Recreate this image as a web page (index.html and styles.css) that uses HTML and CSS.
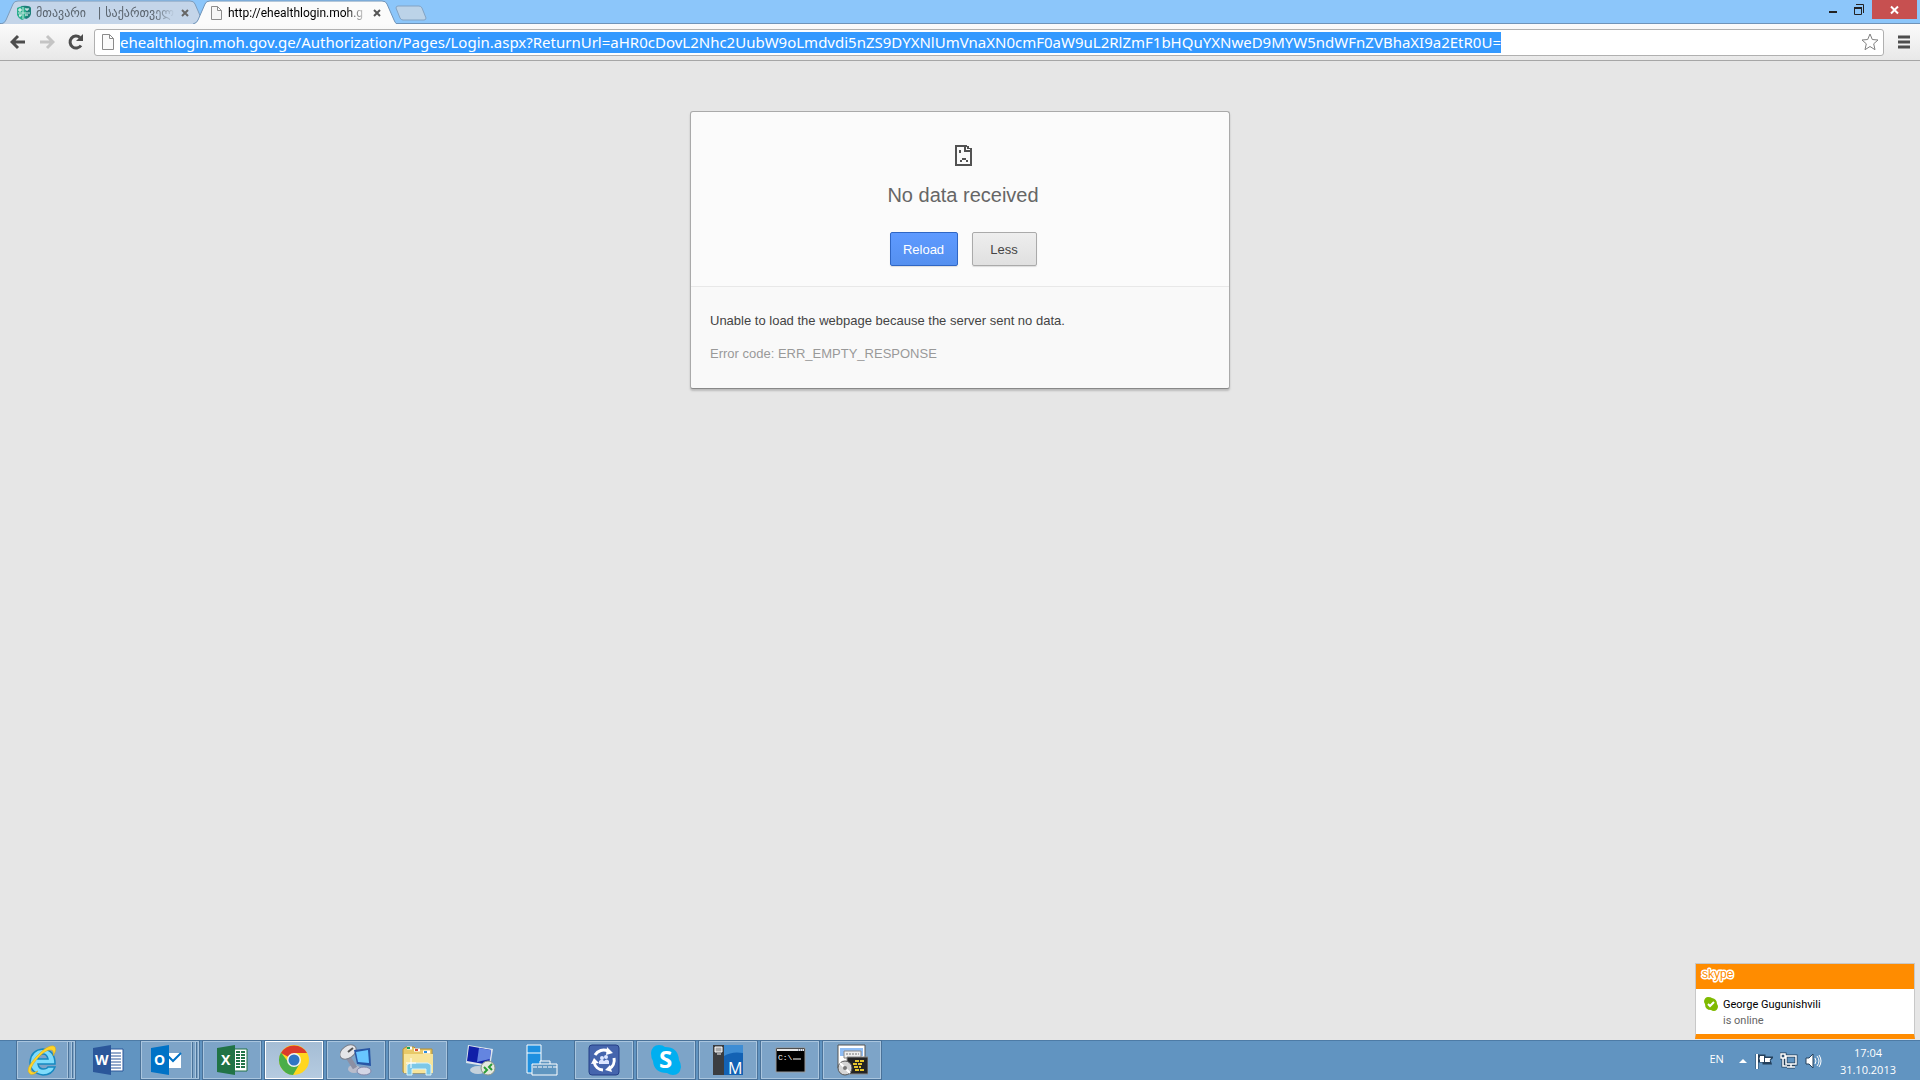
FILE: index.html
```html
<!DOCTYPE html>
<html lang="en">
  <head>
    <meta charset="UTF-8" />
    <meta name="viewport" content="width=device-width, initial-scale=1.0" />
    <title>No data received</title>
    <link rel="stylesheet" href="styles.css">
  </head>
  <body>
    <header class="tabstrip">
      <nav class="tabs">
        <a href="#" class="tab">
          <svg class="tab_shape" viewBox="0 0 204 24" preserveAspectRatio="none"><path d="M0 24 Q4 23 5 20 L12 4 Q13 1 17 1 H189 Q193 1 194 4 L201 20 Q202 23 204 24" fill="#c4d5e9" stroke="#7c9cbc"/></svg>
          <svg class="favicon" viewBox="0 0 16 16"><path d="M5 1Q14 0 15 3V9Q14 13 10 14Q8 12 6 12V4Z" fill="#1c7f78"/><path d="M1 3Q5 0 10 3V11Q9 14 6 15Q2 13 1 10Z" fill="#2bae8d"/><path d="M7 2V14M2 8H14" stroke="#c4e6de"/><path d="M2 5H6M4 3V7M9 4H13M11 4V6M9 10H12M3 10H6M4 10V12" stroke="#fff"/></svg>
          <span class="tab_title geo">მთავარი &nbsp; | საქართველ</span>
          <span class="tab_close"><svg viewBox="0 0 8 8"><path d="M1 1L7 7M7 1L1 7" stroke="#666" stroke-width="2"/></svg></span>
        </a>
        <a href="#" class="tab valgt">
          <svg class="tab_shape" viewBox="0 0 204 24" preserveAspectRatio="none"><path d="M0 24 Q4 23 5 20 L12 4 Q13 1 17 1 H189 Q193 1 194 4 L201 20 Q202 23 204 24" fill="#fbfbfb" stroke="#6f93b8"/></svg>
          <svg class="favicon" viewBox="0 0 16 16"><path d="M3.500 1.500H9.500L13.500 5.500V14.500H3.500ZM9.500 1.500V5.500H13.500" fill="#f6f6f6" stroke="#8d8d8d"/></svg>
          <span class="tab_title">http://ehealthlogin.moh.g</span>
          <span class="tab_close"><svg viewBox="0 0 8 8"><path d="M1 1L7 7M7 1L1 7" stroke="#555" stroke-width="2"/></svg></span>
        </a>
        <button class="new_tab" aria-label="New tab"><svg viewBox="0 0 32 16"><path d="M3 1H24Q26 1 27 3L31 13Q31 15 29 15H8Q6 15 5 13L1 3Q1 1 3 1Z" fill="#bcd3e8" stroke="#83a3c3"/></svg></button>
      </nav>
      <div class="window_buttons">
        <button aria-label="Minimize"><svg width="10" height="12"><path d="M1 8H9" stroke="#222" stroke-width="2"/></svg></button>
        <button aria-label="Restore"><svg width="12" height="12"><path d="M1 3.500H8.500V10.500H1.500V3M3 .500H10.500V9" fill="none" stroke="#222"/><path d="M1 4H9" stroke="#222" stroke-width="2"/></svg></button>
        <button class="close" aria-label="Close"><svg width="10" height="10"><path d="M1 1.500L8 8.500M8 1.500L1 8.500" stroke="#fff" stroke-width="2"/></svg></button>
      </div>
    </header>

    <form class="toolbar">
      <button type="button" aria-label="Back"><svg viewBox="0 0 16 16"><path d="M8 2L2 8L8 14M2 8H15" fill="none" stroke="#4d4d4d" stroke-width="3"/></svg></button>
      <button type="button" aria-label="Forward"><svg viewBox="0 0 16 16"><path d="M8 2L14 8L8 14M14 8H1" fill="none" stroke="#c4c4c4" stroke-width="3"/></svg></button>
      <button type="button" aria-label="Reload page"><svg viewBox="0 0 16 16"><path d="M13 11.500A6 6 0 1 1 12 3.500" fill="none" stroke="#4d4d4d" stroke-width="3"/><path d="M15 0V7H8Z" fill="#4d4d4d"/></svg></button>
      <div class="omnibox">
        <svg class="page_icon" viewBox="0 0 12 16"><path d="M.5 .5H7.500L11.500 4.500V15.500H.5ZM7.500 .5V4.500H11.500" fill="#fafafa" stroke="#8a8a8a"/></svg>
        <input type="text" class="url" aria-label="Address" spellcheck="false" value="ehealthlogin.moh.gov.ge/Authorization/Pages/Login.aspx?ReturnUrl=aHR0cDovL2Nhc2UubW9oLmdvdi5nZS9DYXNlUmVnaXN0cmF0aW9uL2RlZmF1bHQuYXNweD9MYW5ndWFnZVBhaXI9a2EtR0U=">
        <button type="button" class="star" aria-label="Bookmark"><svg viewBox="0 0 18 18"><path d="M9 1L11.300 6.500L17 7L12.700 10.800L14 16.700L9 13.500L4 16.700L5.300 10.800L1 7L6.700 6.500Z" fill="#fff" stroke="#808080" stroke-linejoin="round"/></svg></button>
      </div>
      <button type="button" class="menu" aria-label="Menu"><svg viewBox="0 0 14 14"><path d="M1 2H13M1 7H13M1 12H13" stroke="#4d4d4d" stroke-width="3"/></svg></button>
    </form>

    <main>
      <article class="error">
        <section class="error_top">
          <svg class="sad" width="17" height="21" shape-rendering="crispEdges"><path d="M0 0H12V2H2V19H15V7H9V0H11V5H17V21H0Z" fill="#525252"/><path d="M12 1h2v2h3v4h-2V4h-3zM4 5h2v3H4zM5 15h2v2H5zM11 15h2v2h-2zM7 13h4v2H7z" fill="#525252"/></svg>
          <h1>No data received</h1>
          <div class="knapper">
            <button class="reload">Reload</button>
            <button class="less">Less</button>
          </div>
        </section>
        <section class="details">
          <p>Unable to load the webpage because the server sent no data.</p>
          <p class="code">Error code: ERR_EMPTY_RESPONSE</p>
        </section>
      </article>
    </main>

    <aside class="toast">
      <div class="toast_top">
        <svg width="40" height="20"><text x="3" y="12" class="skype_logo">skype</text></svg>
      </div>
      <div class="toast_body">
        <svg width="14" height="14"><path d="M4 0Q7 0 8 1Q13 2 13 7Q14 8 14 10Q13 14 10 14Q8 14 7 13Q1 13 1 7Q0 6 0 4Q1 0 4 0Z" fill="#7fba00"/><path d="M4 7L6 9L10 5" fill="none" stroke="#fff" stroke-width="2"/></svg>
        <div>
          <p class="name">George Gugunishvili</p>
          <p class="status">is online</p>
        </div>
      </div>
    </aside>

    <footer class="taskbar">
      <div class="apps">
        <button class="app open stacked" aria-label="Internet Explorer">
          <svg viewBox="0 0 32 32"><path d="M29 20H12Q13 25 17 25Q21 25 22 23H29Q26 31 17 31Q4 29 4 18Q5 6 17 5Q29 6 29 20ZM12 15H22Q21 10 17 10Q13 10 12 15Z" fill="#7fdcfb" stroke="#1688c0" stroke-width="1.500"/><path d="M4 30Q-2 26 10 13Q22 0 28 2Q32 5 27 12Q28 6 25 6Q20 5 11 15Q2 26 6 28Q8 29 12 27Q7 32 4 30Z" fill="#ffd42a" stroke="#d5a411" stroke-width=".5"/></svg>
        </button>
        <button class="app" aria-label="Word">
          <svg viewBox="0 0 32 32"><path d="M17 5H31V27H17Z" fill="#fff" stroke="#2b579a"/><path d="M19 9H29M19 12H29M19 15H29M19 18H29M19 21H29M19 24H29" stroke="#2b579a"/><path d="M1 4L19 1V31L1 28Z" fill="#2b579a"/><text x="3" y="21" class="letter">W</text></svg>
        </button>
        <button class="app open stacked" aria-label="Outlook">
          <svg viewBox="0 0 32 32"><path d="M18 9H31V24H18Z" fill="#fff"/><path d="M18 12L23 17L31 9" fill="none" stroke="#0072c6" stroke-width="2"/><path d="M1 4L19 1V31L1 28Z" fill="#0072c6"/><text x="4" y="21" class="letter">O</text></svg>
        </button>
        <button class="app open" aria-label="Excel">
          <svg viewBox="0 0 32 32"><path d="M17 5H31V27H17Z" fill="#fff" stroke="#217346"/><path d="M22 7V25M27 7V25" stroke="#217346" stroke-width="4" stroke-dasharray="2 1"/><path d="M1 4L19 1V31L1 28Z" fill="#217346"/><text x="5" y="21" class="letter">X</text></svg>
        </button>
        <button class="app open valgt" aria-label="Chrome">
          <svg viewBox="0 0 32 32"><circle cx="16" cy="16" r="15" fill="#ffd61f"/><path d="M16 16L3 9A15 15 0 0 1 29 9H16Z" fill="#db3b2b"/><path d="M3 8.500A15 15 0 0 0 15 31L22 19L11 19Z" fill="#4aae48"/><circle cx="16" cy="16" r="7" fill="#f3f3f3"/><circle cx="16" cy="16" r="5.500" fill="#2f75c4"/></svg>
        </button>
        <button class="app open" aria-label="Remote monitor">
          <svg viewBox="0 0 32 32"><ellipse cx="14" cy="25" rx="6" ry="4" fill="#b9bccb"/><path d="M8 13L15 24" stroke="#8c8fa3" stroke-width="5"/><ellipse cx="8" cy="8" rx="9" ry="6" transform="rotate(-35 8 8)" fill="#e4e5e9" stroke="#777d89"/><path d="M8 8L13 4" stroke="#555" stroke-width="2"/><ellipse cx="24" cy="27" rx="7" ry="4" fill="#d3d5e5" stroke="#8488aa"/><path d="M14 6L30 4L31 22L17 20Z" fill="#2856a5"/><path d="M16 8L28 6L29 19L18 18Z" fill="#68c6ff"/></svg>
        </button>
        <button class="app open" aria-label="File Explorer">
          <svg viewBox="0 0 32 32"><path d="M1 28V5L4 3H12L14 5H30V29H3Z" fill="#e8c968" stroke="#b89132"/><path d="M5 4H10M12 6H18M21 8H28" stroke="#fff" stroke-width="3"/><path d="M5 4H8" stroke="#19a35b" stroke-width="2"/><path d="M13 6H16" stroke="#d84a32" stroke-width="2"/><path d="M22 8H25" stroke="#2b8de0" stroke-width="2"/><path d="M2 10H31V29H2Z" fill="#f7e49a"/><path d="M5 31V21L8 19H26L29 21V31H24V25H10V31Z" fill="#7cc8e8" stroke="#d8f3fc"/><path d="M9 14V24M4 19H14" stroke="#fff"/></svg>
        </button>
        <button class="app" aria-label="Remote Desktop">
          <svg viewBox="0 0 32 32"><ellipse cx="14" cy="26" rx="8" ry="4" fill="#c5d2dc"/><path d="M4 1L29 5L26 23L2 19Z" fill="#dde5ed"/><path d="M5 2L27 6L25 21L3 17Z" fill="#1020a8"/><path d="M15 4L27 6L26 15L13 18Z" fill="#6485e0"/><circle cx="24" cy="24" r="7" fill="#e4e8df" stroke="#8a9488"/><path d="M20 23L23 26L20 29M28 20L25 23L28 26" fill="none" stroke="#2b9c36" stroke-width="2"/></svg>
        </button>
        <button class="app" aria-label="Server Manager">
          <svg viewBox="0 0 32 32"><path d="M1 1H15V29H1ZM1 9H15" fill="#1e90e0" stroke="#fff"/><path d="M6 20H31V31H6ZM14 20V17H24V20" fill="#6096c0" stroke="#fff"/><path d="M7 23H31" stroke="#fff" stroke-dasharray="4 1"/></svg>
        </button>
        <button class="app open" aria-label="Updater">
          <svg viewBox="0 0 32 32"><rect x="1" y="1" width="30" height="30" rx="3" fill="#4565ad" stroke="#243e86"/><path d="M7 11A10 10 0 0 1 20 7M26 14A10 10 0 0 1 21 25M15 26A10 10 0 0 1 6 18" fill="none" stroke="#fff" stroke-width="3"/><path d="M19 3L25 9L18 11ZM22 21L24 28L17 26ZM3 20L6 14L11 19Z" fill="#fff"/><circle cx="14" cy="14" r="2" fill="#dce6ff"/><circle cx="18" cy="13" r="2" fill="#dce6ff"/><path d="M11 20V17Q14 14 16 17Q19 14 21 17V20Z" fill="#dce6ff"/></svg>
        </button>
        <button class="app open" aria-label="Skype">
          <svg viewBox="0 0 32 32"><path d="M9 1Q13 1 15 3Q28 3 29 16Q31 19 31 23Q30 31 23 31Q20 31 17 29Q4 29 3 17Q1 14 1 9Q2 1 9 1Z" fill="#00aff0"/><text x="9" y="24" class="letter big">S</text></svg>
        </button>
        <button class="app open" aria-label="Management">
          <svg viewBox="0 0 32 32"><path d="M1 1H13V31H1Z" fill="#3b3d40"/><path d="M12 1H31V31H12Z" fill="#1362b4"/><path d="M12 1H31V9Q20 7 12 12Z" fill="#3e8dd4"/><path d="M3 3H10V8H3ZM5 10H9" fill="#aaa" stroke="#fff"/><text x="16" y="30" class="letter thin">M</text></svg>
        </button>
        <button class="app open" aria-label="Command Prompt">
          <svg viewBox="0 0 32 32"><path d="M2 4H31V28H2Z" fill="#000" stroke="#999"/><path d="M3 6H30" stroke="#e5e5e5" stroke-width="2"/><path d="M24 6H29" stroke="#346" stroke-dasharray="1 1"/><text x="4" y="16" class="prompt">C:\</text><path d="M19 15H27" stroke="#fff"/></svg>
        </button>
        <button class="app open" aria-label="Installer">
          <svg viewBox="0 0 32 32"><path d="M2 1H29V24H2Z" fill="#fff" stroke="#555"/><path d="M4 4H27V12H4Z" fill="#8fbdf5"/><path d="M8 7H25V14H8Z" fill="#eee" stroke="#888"/><path d="M10 10H23" stroke="#777" stroke-dasharray="2 1"/><path d="M11 13H32V30H11Z" fill="#242424" stroke="#888"/><path d="M19 17H28M17 20H27M18 23H25M19 26H28" stroke="#e6c52c" stroke-width="2" stroke-dasharray="4 1"/><circle cx="9" cy="24" r="7" fill="#d5d5d5" stroke="#555"/><path d="M4 19L14 29" stroke="#fff" stroke-width="2"/><circle cx="9" cy="24" r="2" fill="#777"/></svg>
        </button>
      </div>
      <div class="tray">
        <span class="lang">EN</span>
        <svg width="10" height="6"><path d="M1 5L5 1L9 5Z" fill="#fff"/></svg>
        <svg width="18" height="18"><path d="M2 2V17M3 4H9V6H16L14 8L15 11H9V9H3Z" fill="#fff" stroke="#24405c" stroke-width="3"/><path d="M2 2V17" stroke="#fff" stroke-width="2"/><path d="M5 4H9V10H5ZM10 6H16Q14 8 15 10H10Z" fill="#fff"/></svg>
        <svg width="18" height="18"><path d="M6 4H16V12H6ZM11 12V15M7 15H15M1 2H5V6H1ZM3 6V14H7" fill="none" stroke="#24405c" stroke-width="3"/><path d="M6 4H16V12H6ZM11 12V15M7 15H15M1 2H5V6H1ZM3 6V14H7" fill="none" stroke="#fff" stroke-width="1.500"/></svg>
        <svg width="18" height="18"><path d="M1 6H4L8 2V16L4 12H1Z" fill="#fff" stroke="#24405c"/><path d="M10 6Q12 9 10 12M12 4Q16 9 12 14M14 3Q18 9 14 15" fill="none" stroke="#fff"/></svg>
        <time class="clock">17:04<br>31.10.2013</time>
      </div>
    </footer>
  </body>
</html>
```
FILE: styles.css
```css
* {
  box-sizing: border-box;
  margin: 0;
  padding: 0;
}
body {
  display: flex;
  flex-direction: column;
  min-height: 100vh;
  background-color: #e6e6e6;
  font-family: "Liberation Sans", Arial, sans-serif;
}
button {
  border: none;
  background: none;
  font-family: inherit;
}
svg {
  display: block;
  flex: none;
}

/* tabs */
.tabstrip {
  display: flex;
  justify-content: space-between;
  height: 24px;
  background-color: #8cc6fa;
  border-bottom: 1px solid #6f93b8;
}
.tabs {
  display: flex;
  padding-left: 1px;
}
.tab {
  position: relative;
  display: flex;
  align-items: center;
  width: 204px;
  height: 24px;
  margin-right: -12px;
  padding: 2px 12px 0 15px;
  color: #5c6670;
  font-family: Roboto, sans-serif;
  font-size: 12px;
  text-decoration: none;
}
.tab.valgt {
  z-index: 1;
  color: #000;
}
.tab_shape {
  position: absolute;
  inset: 0;
  width: 100%;
  height: 100%;
}
.favicon {
  position: relative;
  width: 16px;
  height: 16px;
}
.tab_title {
  position: relative;
  flex: 1;
  margin: 0 6px 0 4px;
  white-space: nowrap;
  mask-image: linear-gradient(to right, #000 85%, transparent);
}
.geo {
  font-family: "DejaVu Sans", sans-serif;
}
.tab_close {
  position: relative;
  width: 8px;
  margin-right: 4px;
}
.new_tab {
  width: 32px;
  height: 16px;
  margin: 5px 0 0 10px;
}
.window_buttons {
  display: flex;
  padding-right: 3px;
}
.window_buttons button {
  display: flex;
  justify-content: center;
  width: 26px;
  height: 19px;
  padding-top: 4px;
}
.window_buttons .close {
  width: 45px;
  padding-top: 5px;
  background-color: #c75050;
}

/* toolbar */
.toolbar {
  display: flex;
  align-items: center;
  gap: 13px;
  height: 37px;
  padding: 0 9px 0 10px;
  background: linear-gradient(#fbfbfb, #e8e8e8);
  border-bottom: 1px solid #a6a6a6;
}
.toolbar button {
  width: 16px;
  height: 16px;
}
.omnibox {
  display: flex;
  flex: 1;
  align-items: center;
  height: 27px;
  min-width: 0;
  margin-left: -3px;
  padding: 0 4px 0 7px;
  background-color: #fff;
  border: 1px solid #b0b0b0;
  border-radius: 3px;
}
.page_icon {
  width: 12px;
  height: 16px;
  margin-right: 6px;
}
.url {
  field-sizing: content;
  min-width: 0;
  height: 21px;
  border: none;
  outline: none;
  background-color: #3399ff;
  color: #fff;
  font-family: "Noto Sans", sans-serif;
  font-size: 15px;
}
.toolbar .star {
  width: 18px;
  height: 18px;
  margin-left: auto;
}
.toolbar .menu {
  width: 14px;
  height: 14px;
}

/* error page */
main {
  flex: 1;
  padding: 50px 20px;
}
.error {
  max-width: 540px;
  margin: 0 auto;
  background-color: #fbfbfb;
  border: 1px solid #aaa;
  border-bottom-color: #888;
  border-radius: 3px;
  box-shadow: 0 2px 2px #bbb;
}
.error_top {
  display: flex;
  flex-direction: column;
  align-items: center;
  padding: 33px 0 20px 6px;
}
h1 {
  margin: 17px 0 25px;
  color: #666;
  font-size: 20px;
  font-weight: normal;
  line-height: 24px;
}
.knapper {
  display: flex;
  gap: 14px;
}
.knapper button {
  height: 34px;
  border: 1px solid #aaa;
  border-radius: 2px;
  box-shadow: 0 1px 1px #ddd;
  font-size: 13px;
}
.knapper .reload {
  width: 68px;
  background: linear-gradient(#5e9aff, #5590ef);
  border-color: #2f66c4;
  color: #fff;
}
.knapper .less {
  width: 65px;
  background: linear-gradient(#eee, #e0e0e0);
  color: #444;
}
.details {
  padding: 24px 19px;
  background-color: #f9f9f9;
  border-top: 1px solid #e8e8e8;
  border-radius: 0 0 3px 3px;
  color: #444;
  font-size: 13px;
  line-height: 20px;
}
.details .code {
  margin-top: 13px;
  color: #999;
}

/* skype notification */
.toast {
  position: fixed;
  right: 5px;
  bottom: 41px;
  width: 220px;
  background-color: #fff;
  border: 1px solid #c8c8c8;
  border-bottom: 5px solid #ff8c00;
}
.toast_top {
  height: 25px;
  padding: 2px 3px;
  background-color: #ff8c00;
}
.skype_logo {
  fill: #ff8c00;
  stroke: #fff;
  stroke-width: 3px;
  stroke-linejoin: round;
  paint-order: stroke;
  font-family: "Liberation Sans", sans-serif;
  font-size: 12px;
}
.toast_body {
  display: flex;
  gap: 5px;
  height: 45px;
  padding: 8px;
  font-family: Roboto, sans-serif;
  font-size: 11px;
  line-height: 16px;
}
.status {
  color: #666;
}

/* taskbar */
.taskbar {
  display: flex;
  justify-content: space-between;
  height: 40px;
  padding: 0 24px 0 17px;
  background-color: #6194c1;
  border-top: 1px solid #4d7ba6;
}
.apps {
  display: flex;
  gap: 4px;
}
.app {
  display: flex;
  justify-content: center;
  align-items: center;
  width: 58px;
  height: 38px;
  border: 1px solid transparent;
}
.app svg {
  width: 32px;
  height: 32px;
}
.app.open {
  background-color: #7da4c8;
  border-color: #a9c5de;
  outline: 1px solid #4a7299;
}
.app.stacked {
  padding-right: 8px;
  background-image: linear-gradient(to right, #a9c5de 1px, #4a7299 1px 2px, transparent 2px 4px, #a9c5de 4px 5px, #4a7299 5px 6px, transparent 6px);
  background-position: 49px 0;
  background-repeat: no-repeat;
}
.app.valgt {
  background: linear-gradient(#a5bdd5, #b5cbe0);
  border-color: #fff;
}
.letter {
  fill: #fff;
  font-family: "Open Sans", sans-serif;
  font-size: 14px;
  font-weight: bold;
}
.letter.big {
  font-size: 24px;
}
.letter.thin {
  font-size: 16px;
  font-weight: normal;
}
.prompt {
  fill: #fff;
  font-family: "Liberation Mono", monospace;
  font-size: 8px;
}
.tray {
  display: flex;
  align-items: center;
  gap: 7px;
  color: #fff;
  font-family: "Open Sans", sans-serif;
  font-size: 11px;
}
.lang {
  margin-right: 7px;
  padding-bottom: 5px;
}
.clock {
  margin-left: 10px;
  line-height: 17px;
  text-align: center;
}
```
